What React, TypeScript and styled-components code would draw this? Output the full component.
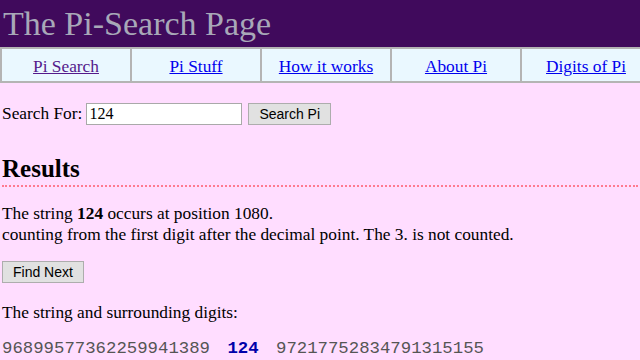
import React from 'react';
import styled, { createGlobalStyle } from 'styled-components';

const GlobalStyle = createGlobalStyle`
  body {
    margin: 0;
    overflow-x: hidden;
    background: #ffddff;
    font-family: "Liberation Serif", "Times New Roman", serif;
    font-size: 17.33px;
    color: #000;
  }
`;

const TitleBar = styled.header`
  background: #400a5c;
  height: 47px;
  padding-left: 3px;
  display: flex;
  align-items: center;
`;

const Title = styled.h1`
  margin: 0;
  font-weight: normal;
  font-size: 34px;
  color: #a8a8b8;
`;

const NavTable = styled.nav`
  display: grid;
  grid-template-columns: repeat(5, 130px);
  width: 650px;
  background: #eaf8ff;
  border-top: 2px solid #b4b4b4;
  border-bottom: 2px solid #b4b4b4;
`;

const NavCell = styled.div`
  height: 32px;
  padding-top: 3px;
  box-sizing: border-box;
  display: flex;
  align-items: center;
  justify-content: center;
  border-left: 2px solid #b4b4b4;
`;

const NavLink = styled.a<{ $visited?: boolean }>`
  color: ${(p) => (p.$visited ? '#551a8b' : '#0000ee')};
  text-decoration: underline;
`;

const Main = styled.main`
  padding: 0 2px;
`;

const SearchForm = styled.form`
  margin-top: 20px;
  display: flex;
  align-items: center;
  gap: 4px;
`;

const TextInput = styled.input`
  width: 150px;
  height: 18px;
  padding: 1px 2px;
  margin-right: 2px;
  border: 1px solid #a9a9a9;
  font-family: "Liberation Serif", serif;
  font-size: 16px;
`;

const Button = styled.button`
  font-family: "Liberation Sans", Arial, sans-serif;
  font-size: 14px;
  background: #e1e1e1;
  border: 1px solid #adadad;
  padding: 2px 10px;
  color: #000;
`;

const ResultsHeading = styled.h2`
  margin: 30px 0 0;
  font-size: 25px;
  font-weight: bold;
  padding-bottom: 2px;
  border-bottom: 2px dotted #ff7a90;
`;

const Para = styled.p<{ $top?: number }>`
  margin: ${(p) => p.$top ?? 16}px 0 16px;
  line-height: 21px;
`;

const Digits = styled.div`
  margin-top: 14px;
  font-family: "Liberation Mono", "Courier New", monospace;
  font-size: 17.33px;
  color: #555;
  white-space: pre;
`;

const Match = styled.b`
  color: #0000aa;
  margin: 0 7px;
`;

const links = ['Pi Search', 'Pi Stuff', 'How it works', 'About Pi', 'Digits of Pi'];

export default function App() {
  return (
    <>
      <GlobalStyle />
      <TitleBar>
        <Title>The Pi-Search Page</Title>
      </TitleBar>
      <NavTable>
        {links.map((l, i) => (
          <NavCell key={l}>
            <NavLink href="#" $visited={i === 0}>{l}</NavLink>
          </NavCell>
        ))}
      </NavTable>
      <Main>
        <SearchForm>
          Search For: <TextInput defaultValue="124" />
          <Button type="button">Search Pi</Button>
        </SearchForm>
        <ResultsHeading>Results</ResultsHeading>
        <Para>
          The string <b>124</b> occurs at position 1080.<br />
          counting from the first digit after the decimal point. The 3. is not counted.
        </Para>
        <Button type="button">Find Next</Button>
        <Para $top={19}>The string and surrounding digits:</Para>
        <Digits>
          96899577362259941389 <Match>124</Match> 97217752834791315155
        </Digits>
      </Main>
    </>
  );
}
